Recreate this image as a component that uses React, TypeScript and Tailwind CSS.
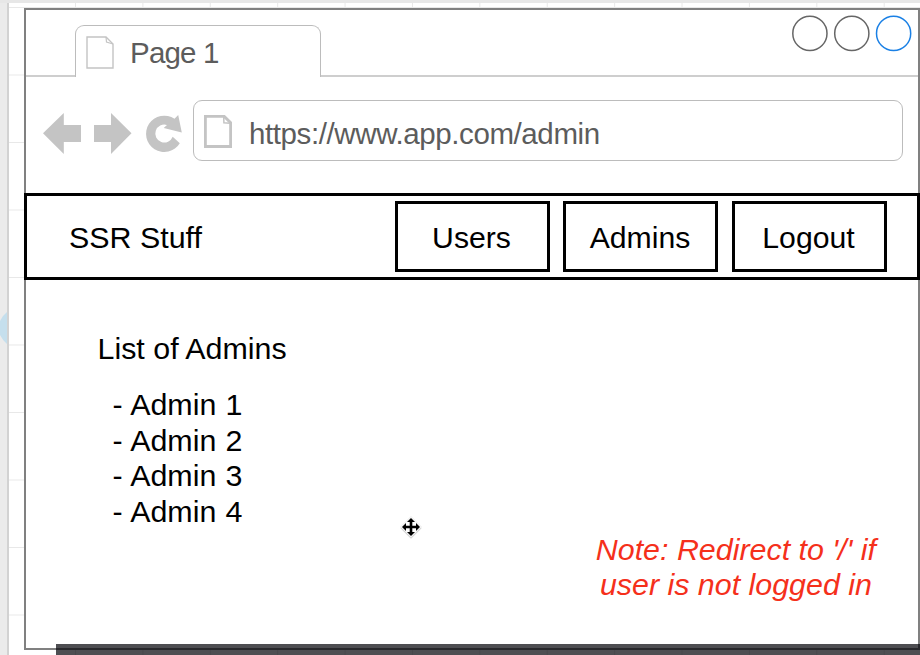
import React from "react";

const admins = ["Admin 1", "Admin 2", "Admin 3", "Admin 4"];
const links = ["Users", "Admins", "Logout"];

function WindowButtons() {
  return (
    <svg className="mt-[4px] h-[40px] w-[126px]" viewBox="0 0 126 40" fill="none" strokeWidth="1.5">
      <circle cx="17.9" cy="19.4" r="17.1" stroke="#666666" />
      <circle cx="59.8" cy="19.4" r="17.1" stroke="#666666" />
      <circle cx="101.6" cy="19.4" r="17.1" stroke="#1a80e5" />
    </svg>
  );
}

function TabStrip() {
  return (
    <div className="flex h-[67px] shrink-0">
      <div className="w-[49px] border-b-2 border-[#cecece]" />
      <div className="mt-[15px] flex w-[246px] rounded-t-[9px] border-x-[1.5px] border-t-[1.5px] border-[#bcbcbc]">
        <svg className="mt-[10px] ml-[10px] h-[34px] w-[29px] shrink-0" viewBox="0 0 29 34" fill="none" stroke="#c4c4c4" strokeWidth="1.4">
          <path d="M1 1H20L27 8V32H1Z" />
          <path d="M20 1L20.5 6L27 8" strokeWidth="1.2" />
        </svg>
        <span className="mt-[9px] ml-[15px] text-[29.5px] leading-[36px] tracking-[-0.8px] text-[#5c5c5c]">Page 1</span>
      </div>
      <div className="flex flex-1 justify-end border-b-2 border-[#cecece]">
        <WindowButtons />
      </div>
    </div>
  );
}

function AddressBar() {
  return (
    <div className="flex h-[116px] shrink-0 pt-[23px]">
      <svg className="h-[61px] w-[167px] shrink-0" viewBox="26 100 167 61" fill="#c4c4c4">
        <path d="M43 133.3L63.8 113V125H81V142H63.8V154Z" />
        <path d="M131.5 133.3L111 113V125H94V142H111V154Z" />
        <path d="M179.8 143.3A18.2 18.2 0 1 1 174.5 118.8L178.2 115L181.8 132.5L163.7 128L167 125A9 9 0 1 0 172.7 136.8Z" />
      </svg>
      <div className="flex h-[61px] w-[710px] rounded-[9px] border-[1.5px] border-[#bcbcbc]">
        <svg className="mt-[13px] ml-[9px] h-[35px] w-[30px] shrink-0" viewBox="0 0 30 35" fill="none" stroke="#c4c4c4" strokeWidth="2.8">
          <path d="M2.4 2.4H21.3L27.6 8.7V32.5H2.4Z" />
          <path d="M20.7 2L20.9 8.7L27 9.2" strokeWidth="1.5" />
        </svg>
        <span className="mt-[15px] ml-[16px] text-[29.5px] leading-[36px] tracking-[-0.4px] whitespace-nowrap text-[#5c5c5c]">https://www.app.com/admin</span>
      </div>
    </div>
  );
}

function NavBar() {
  return (
    <nav className="-mr-[2px] -ml-[2px] flex h-[87px] shrink-0 items-center border-3 border-black pb-px">
      <span className="ml-[42px] w-[325.5px] pt-[3px] text-[30.4px] whitespace-nowrap">SSR Stuff</span>
      <div className="flex gap-[13.5px]">
        {links.map((label) => (
          <a key={label} className="flex h-[71px] w-[155px] items-center justify-center border-3 border-black pt-[3px] pr-px">
            {label}
          </a>
        ))}
      </div>
    </nav>
  );
}

function MoveCursor() {
  return (
    <svg className="absolute top-[515px] left-[399px] h-[25px] w-[24px]" viewBox="-12 -12 24 25">
      <path d="M0-10.5L10.5 0L0 10.5L-10.5 0Z" fill="#ccc" transform="translate(0 1.2)" />
      <path d="M0-10.5L10.5 0L0 10.5L-10.5 0Z" fill="white" stroke="#ddd" strokeWidth=".6" />
      <path d="M0-9L4-5H1.3V-1.3H5V-4L9 0L5 4V1.3H1.3V5H4L0 9L-4 5H-1.3V1.3H-5V4L-9 0L-5-4V-1.3H-1.3V-5H-4Z" fill="black" />
    </svg>
  );
}

export default function App() {
  return (
    <div className="relative flex h-[655px] w-[920px] flex-col overflow-hidden bg-white font-['Liberation_Sans',Arial,sans-serif] text-[30.2px] leading-[35.4px] text-black">
      <div className="h-[3px] shrink-0 bg-[#e7e7e7]" />
      <div className="flex min-h-0 flex-1">
        <div className="flex w-[9px] shrink-0 items-start border-r-2 border-[#d2d2d2] bg-[#ebebeb]">
          <svg className="mt-[309px] h-[32px] w-[7px]" viewBox="0 0 7 32">
            <path d="M7 0V32Q3 29 0 23V9Q3 3 7 0Z" fill="#c5dfed" />
          </svg>
        </div>
        <div className="flex-1 bg-[linear-gradient(to_right,#e8e8e8_1px,transparent_1px),linear-gradient(to_bottom,#e8e8e8_1px,transparent_1px)] bg-[length:67.4px_67.5px] bg-[position:66px_4px] pt-[5px] pl-[15px]">
          <main className="flex h-[642px] w-[896px] flex-col border-2 border-[#808080] bg-white">
            <TabStrip />
            <AddressBar />
            <NavBar />
            <section className="mt-[51px] ml-[71.5px] h-[194px] text-[30.4px]">
              <h1>List of Admins</h1>
              <ul className="mt-[21px] ml-[15px] [word-spacing:0.8px]">
                {admins.map((name) => (
                  <li key={name}>- {name}</li>
                ))}
              </ul>
            </section>
            <p className="mt-[7px] mr-[42px] self-end text-center text-[30.4px] whitespace-nowrap text-[#f5301b] italic">
              Note: Redirect to '/' if
              <br />
              user is not logged in
            </p>
          </main>
        </div>
      </div>
      <MoveCursor />
      <div className="absolute right-0 bottom-0 left-[56px] h-[11px] bg-[rgba(3,3,8,0.7)]" />
    </div>
  );
}
